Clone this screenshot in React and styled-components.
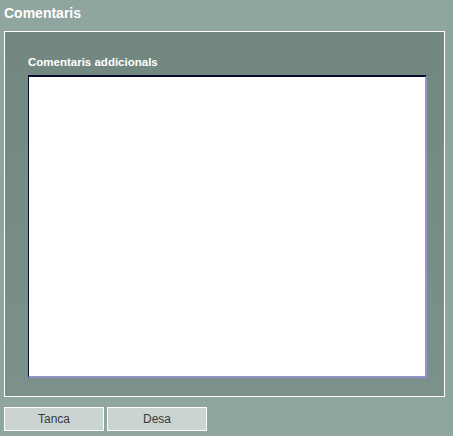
import React from 'react'
import styled, {createGlobalStyle} from 'styled-components'

const Global = createGlobalStyle`
	html, body {
		margin: 0;
		padding: 0;
		background: #8fa59f;
	}
	body {
		font-family: "Liberation Sans", Arial, sans-serif;
	}
`

const Page = styled.div`
	width: 453px;
	height: 436px;
	box-sizing: border-box;
	padding: 4px 0 0 4px;
	display: flex;
	flex-direction: column;
	background: #8fa59f;
`

const Title = styled.h1`
	margin: 0;
	font-size: 14px;
	font-weight: bold;
	color: #fff;
	line-height: 18px;
	height: 27px;
`

const Panel = styled.div`
	width: 441px;
	height: 366px;
	box-sizing: border-box;
	border: 1px solid #fff;
	background: linear-gradient(#72877f, #7c918c);
	padding: 23px 0 0 23px;
	display: flex;
	flex-direction: column;
`

const Label = styled.label`
	font-size: 11.5px;
	font-weight: bold;
	color: #fff;
	line-height: 14px;
	margin-bottom: 6px;
`

const Area = styled.textarea`
	width: 399px;
	height: 303px;
	box-sizing: border-box;
	margin: 0;
	padding: 2px;
	resize: none;
	background: #fff;
	border-style: solid;
	border-width: 2px 2px 2px 1px;
	border-color: #0a0a33 #9494c8 #9494c8 #0a0a33;
	outline: none;
	font-family: "Liberation Sans", Arial, sans-serif;
	font-size: 12px;
`

const Buttons = styled.div`
	display: flex;
	gap: 3px;
	margin-top: 10px;
`

const Button = styled.button`
	width: 100px;
	height: 24px;
	box-sizing: border-box;
	border: 1px solid #fff;
	background: #cbd4d2;
	color: #3a3a3a;
	font-family: "Liberation Sans", Arial, sans-serif;
	font-size: 12px;
	padding: 0;
	cursor: pointer;
`

export default function App() {
	return (
		<Page>
			<Global />
			<Title>Comentaris</Title>
			<Panel>
				<Label htmlFor="comentaris">Comentaris addicionals</Label>
				<Area id="comentaris" />
			</Panel>
			<Buttons>
				<Button>Tanca</Button>
				<Button>Desa</Button>
			</Buttons>
		</Page>
	)
}
